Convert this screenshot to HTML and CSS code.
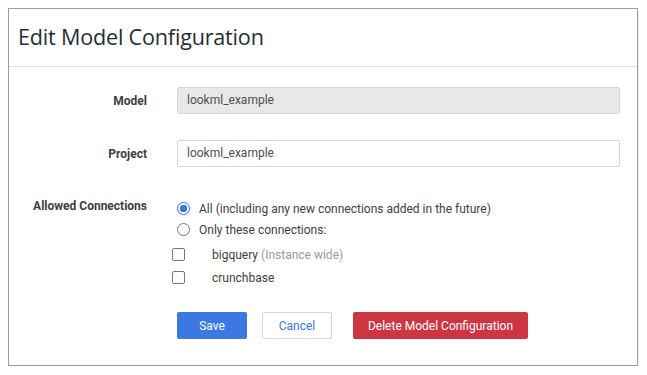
FILE: index.html
```html
<!DOCTYPE html>
<html lang="en">
<head>
<meta charset="UTF-8">
<title>Edit Model Configuration</title>
<link rel="stylesheet" href="styles.css">
</head>
<body>
  <div class="dialog">
    <header class="dialog-header">
      <h1>Edit Model Configuration</h1>
    </header>

    <form class="dialog-body">
      <div class="field">
        <label class="field-label">Model</label>
        <div class="input disabled">lookml_example</div>
      </div>

      <div class="field field-last">
        <label class="field-label">Project</label>
        <div class="input">lookml_example</div>
      </div>

      <div class="field field-top">
        <label class="field-label">Allowed Connections</label>
        <div class="options">
          <div class="option">
            <span class="radio checked"></span>
            <span>All (including any new connections added in the future)</span>
          </div>
          <div class="option">
            <span class="radio"></span>
            <span>Only these connections:</span>
          </div>
          <div class="option sub first">
            <span class="checkbox"></span>
            <span>bigquery <span class="muted">(Instance wide)</span></span>
          </div>
          <div class="option sub">
            <span class="checkbox"></span>
            <span>crunchbase</span>
          </div>
        </div>
      </div>

      <div class="actions">
        <button type="button" class="btn btn-primary">Save</button>
        <button type="button" class="btn btn-outline">Cancel</button>
        <button type="button" class="btn btn-danger">Delete Model Configuration</button>
      </div>
    </form>
  </div>
</body>
</html>
```

FILE: styles.css
```css
:root {
  --text: #262d33;
  --label: #3a3f44;
  --border: #d6d6d6;
  --blue: #3b78e2;
  --red: #cc3642;
}

* {
  margin: 0;
  padding: 0;
  box-sizing: border-box;
}

body {
  margin: 8px;
  font-family: Roboto, "Liberation Sans", sans-serif;
  font-size: 12px;
  color: var(--text);
  background: #fff;
}

.dialog {
  width: 630px;
  height: 358px;
  border: 1px solid #9c9c9c;
  background: #fff;
  box-shadow: 0 0 6px rgba(120, 80, 90, 0.18);
}

.dialog-header {
  height: 58px;
  padding: 13px 9px 0;
  border-bottom: 1px solid #dcdcdc;
}

.dialog-header h1 {
  font-family: "Open Sans", Roboto, sans-serif;
  font-weight: 400;
  font-size: 21.6px;
  letter-spacing: -0.2px;
  color: var(--text);
}

.dialog-body {
  padding: 20px 17px 0 0;
}

.field {
  display: grid;
  grid-template-columns: 138px 1fr;
  column-gap: 30px;
  align-items: center;
  margin-bottom: 26px;
}

.field-last {
  margin-bottom: 31px;
}

.field-top {
  align-items: start;
  margin-bottom: 23px;
}

.field-label {
  text-align: right;
  font-weight: 700;
  color: var(--label);
}

.field-top .field-label {
  padding-top: 1px;
}

.input {
  height: 27px;
  line-height: 25px;
  padding: 0 9px;
  border: 1px solid var(--border);
  border-radius: 2px;
  color: #4a4f54;
}

.input.disabled {
  background: #e8e8e8;
}

.options {
  display: flex;
  flex-direction: column;
}

.option {
  display: flex;
  align-items: center;
  gap: 9px;
  height: 21px;
  color: #3a3f44;
}

.option.sub {
  height: 23px;
  gap: 27px;
  margin-left: -5px;
}

.option.first {
  margin-top: 3px;
}

.muted {
  color: #9a9a9a;
}

.radio {
  width: 13px;
  height: 13px;
  border-radius: 50%;
  border: 1px solid #777;
  background: #fff;
  flex-shrink: 0;
}

.radio.checked {
  border-color: var(--blue);
  background: radial-gradient(circle, var(--blue) 0 3.5px, #fff 4px);
  box-shadow: 0 0 0 1px rgba(59, 120, 226, 0.15);
}

.checkbox {
  width: 13px;
  height: 13px;
  border: 1px solid #777;
  border-radius: 2px;
  background: #fff;
  flex-shrink: 0;
}

.actions {
  display: flex;
  gap: 15px;
  padding-left: 168px;
}

.btn {
  height: 27px;
  border-radius: 2px;
  font-family: Roboto, "Liberation Sans", sans-serif;
  font-size: 12px;
  border: 1px solid transparent;
  cursor: pointer;
}

.btn-primary {
  width: 70px;
  background: var(--blue);
  color: #fff;
}

.btn-outline {
  width: 70px;
  background: #fff;
  border-color: var(--border);
  color: var(--blue);
}

.btn-danger {
  width: 175px;
  margin-left: 6px;
  background: var(--red);
  color: #fff;
}
```
